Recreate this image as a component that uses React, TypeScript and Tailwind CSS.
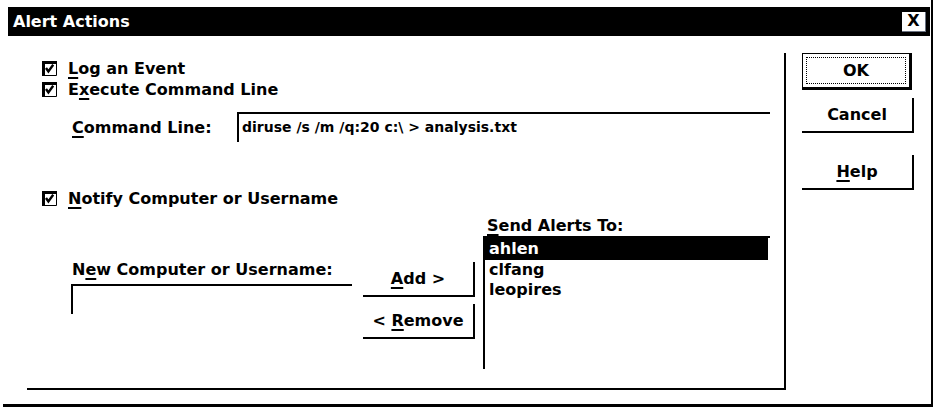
import React from "react";

const font = { fontFamily: '"DejaVu Sans", "Liberation Sans", sans-serif' };

function U({ children }: { children: React.ReactNode }) {
  return <span className="underline decoration-2 underline-offset-[3px]">{children}</span>;
}

function CheckBox() {
  return (
    <svg width="15" height="15" viewBox="0 0 15 15" className="shrink-0">
      <path d="M1.5 15V1.5H15" stroke="black" strokeWidth="3" fill="none" />
      <path d="M14.5 1v13.5H1" stroke="black" strokeWidth="1" fill="none" />
      <path d="M4 7l2.4 3.4 4.8-6.6" stroke="black" strokeWidth="2.4" fill="none" />
    </svg>
  );
}

function Check({ children }: { children: React.ReactNode }) {
  return (
    <div className="flex h-[21px] items-center gap-[11px]">
      <CheckBox />
      <span>{children}</span>
    </div>
  );
}

function Btn({ children, className = "" }: { children: React.ReactNode; className?: string }) {
  return (
    <div className={`flex h-[35px] w-[112px] items-center justify-center border-r-2 border-b-2 border-black ${className}`}>
      {children}
    </div>
  );
}

export default function App() {
  return (
    <div className="h-[414px] w-[935px] bg-white text-[16px] font-bold text-black" style={font}>
      <div className="ml-[3px] flex h-[407px] w-[930px] flex-col border-r-2 border-b-[3px] border-black">
        <div className="mt-[7px] ml-[5px] mr-[1px] flex h-[29px] items-center justify-between bg-black pl-[5px] pr-[4px] text-white">
          <span>Alert Actions</span>
          <div className="flex h-[20px] w-[24px] items-center justify-center border-r border-b border-gray-500 bg-white text-[16px] text-black">X</div>
        </div>

        <div className="flex">
          {/* group box */}
          <div className="mt-[17px] ml-[24px] h-[337px] w-[759px] border-r-2 border-b-2 border-black pt-[5px] pl-[15px]">
            <Check><U>L</U>og an Event</Check>
            <Check>E<U>x</U>ecute Command Line</Check>

            <div className="mt-[12px] flex h-[30px]">
              <div className="ml-[30px] flex w-[165px] items-center pt-[2px]"><U>C</U>ommand Line:</div>
              <div className="flex w-[533px] items-center border-t-2 border-l-2 border-black pl-[3px] pb-[2px] text-[14px] font-bold">
                diruse /s /m /q:20 c:\ &gt; analysis.txt
              </div>
            </div>

            <div className="mt-[46px]">
              <Check><U>N</U>otify Computer or Username</Check>
            </div>

            <div className="mt-[7px] flex items-start">
              <div className="mt-[44px] ml-[29px] w-[281px]">
                <div className="ml-[1px] flex h-[20px] items-center"><span>N<U>e</U>w Computer or Username:</span></div>
                <div className="mt-[4px] h-[30px] border-t-2 border-l-2 border-black"></div>
              </div>
              <div className="mt-[46px] ml-[11px] flex flex-col gap-[7px]">
                <Btn><span><U>A</U>dd &gt;</span></Btn>
                <Btn><span>&lt; <U>R</U>emove</span></Btn>
              </div>
              <div className="ml-[8px] w-[287px]">
                <div className="flex h-[20px] items-center pl-[4px]"><span><U>S</U>end Alerts To:</span></div>
                <div className="h-[133px] border-t-2 border-l-2 border-black pr-[2px]">
                  <div className="flex h-[22px] items-center bg-black pl-[4px] text-white">ahlen</div>
                  <div className="flex h-[20px] items-center pl-[4px]">clfang</div>
                  <div className="flex h-[20px] items-center pl-[4px]">leopires</div>
                </div>
              </div>
            </div>
          </div>

          {/* buttons */}
          <div className="mt-[17px] ml-[16px] flex flex-col">
            <div className="flex h-[37px] w-[110px] items-center justify-center border-t border-l border-r-[3px] border-b-[3px] border-black p-[3px]">
              <div className="flex h-full w-full items-center justify-center border border-dotted border-black">OK</div>
            </div>
            <Btn className="mt-[8px] w-[110px]">Cancel</Btn>
            <Btn className="mt-[22px] w-[110px]"><span><U>H</U>elp</span></Btn>
          </div>
        </div>
      </div>
    </div>
  );
}
